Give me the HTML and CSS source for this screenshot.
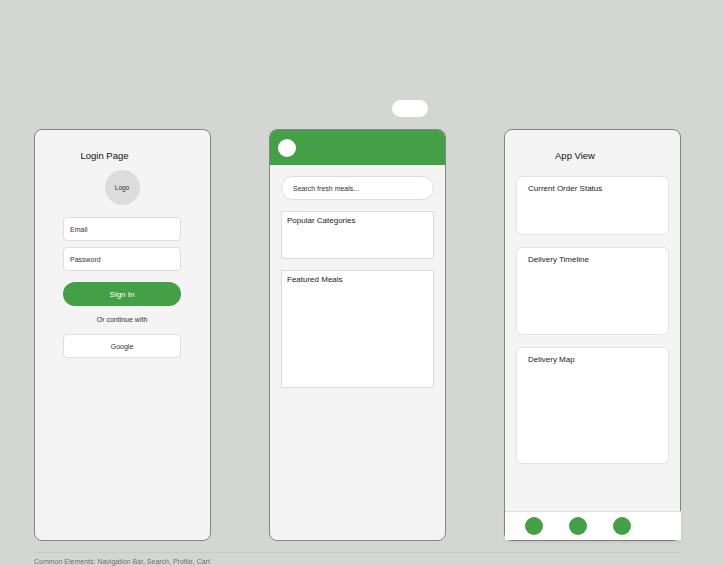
FILE: index.html
```html
<!DOCTYPE html>
<html>
<head>
<meta charset="utf-8">
<link rel="stylesheet" href="styles.css">
</head>
<body>
<div class="page">
  <div class="phones">
    <div class="phone login">
      <div class="title">Login Page</div>
      <div class="logo">Logo</div>
      <div class="field first">Email</div>
      <div class="field">Password</div>
      <div class="btn-primary">Sign In</div>
      <div class="alt">Or continue with</div>
      <div class="btn-google">Google</div>
    </div>

    <div class="phone home">
      <div class="notch"></div>
      <div class="header"><div class="avatar"></div></div>
      <div class="home-body">
        <div class="search">Search fresh meals...</div>
        <div class="box box-cats">Popular Categories</div>
        <div class="box box-meals">Featured Meals</div>
      </div>
    </div>

    <div class="phone app">
      <div class="title">App View</div>
      <div class="cards">
        <div class="card card-status">Current Order Status</div>
        <div class="card card-timeline">Delivery Timeline</div>
        <div class="card card-map">Delivery Map</div>
      </div>
      <div class="nav">
        <span class="dot"></span>
        <span class="dot"></span>
        <span class="dot"></span>
      </div>
    </div>
  </div>
  <div class="footer">Common Elements: Navigation Bar, Search, Profile, Cart</div>
</div>
</body>
</html>
```

FILE: styles.css
```css
* { box-sizing: border-box; }
html, body {
  margin: 0;
  padding: 0;
  background: #d4d6d3;
  font-family: "Liberation Sans", Arial, sans-serif;
  color: #222;
  overflow: hidden;
}
.page {
  padding: 129px 42px 0 34px;
}
.phones {
  display: grid;
  grid-template-columns: 177px 177px 177px;
  column-gap: 58px;
}
.phone {
  position: relative;
  height: 412px;
  background: #f4f4f4;
  border: 1px solid #858585;
  border-radius: 8px;
}
.title {
  margin-top: 20px;
  padding-right: 35px;
  text-align: center;
  font-size: 9.5px;
  line-height: 12px;
  color: #111;
}

/* login */
.login {
  display: flex;
  flex-direction: column;
  padding: 0 29px 0 28px;
}
.logo {
  align-self: center;
  width: 35px;
  height: 35px;
  margin-top: 8px;
  border-radius: 50%;
  background: #dcdcdc;
  display: flex;
  align-items: center;
  justify-content: center;
  font-size: 6.5px;
  color: #333;
}
.field {
  height: 24px;
  margin-top: 6px;
  background: #fff;
  border: 1px solid #dedede;
  border-radius: 4px;
  padding-left: 6px;
  display: flex;
  align-items: center;
  font-size: 7px;
  color: #333;
}
.field.first { margin-top: 12px; }
.btn-primary {
  height: 24px;
  margin-top: 11px;
  background: #43a047;
  border-radius: 12px;
  color: #fff;
  font-size: 8px;
  display: flex;
  align-items: center;
  justify-content: center;
}
.alt {
  margin-top: 9px;
  text-align: center;
  font-size: 7px;
  line-height: 10px;
  color: #333;
}
.btn-google {
  height: 24px;
  margin-top: 9px;
  background: #fff;
  border: 1px solid #dedede;
  border-radius: 4px;
  font-size: 7px;
  color: #333;
  display: flex;
  align-items: center;
  justify-content: center;
  padding-top: 1px;
}

/* home */
.notch {
  position: absolute;
  top: -30px;
  right: 17px;
  width: 36px;
  height: 17px;
  border-radius: 9px;
  background: #fff;
}
.header {
  height: 35px;
  background: #43a047;
  border-radius: 7px 7px 0 0;
  display: flex;
  align-items: center;
  padding-left: 8px;
}
.avatar {
  width: 18px;
  height: 18px;
  border-radius: 50%;
  background: #fff;
}
.home-body {
  padding: 11px 11px 0 11px;
  display: flex;
  flex-direction: column;
  gap: 11px;
}
.search {
  height: 24px;
  background: #fff;
  border: 1px solid #dedede;
  border-radius: 12px;
  padding-left: 11px;
  display: flex;
  align-items: center;
  font-size: 7px;
  color: #333;
}
.box {
  background: #fff;
  border: 1px solid #dcdcdc;
  padding: 4px 5px;
  font-size: 8px;
  line-height: 10px;
  color: #222;
}
.box-cats { height: 48px; }
.box-meals { height: 118px; }

/* app */
.cards {
  margin-top: 14px;
  padding: 0 11px;
  display: flex;
  flex-direction: column;
  gap: 12px;
}
.card {
  background: #fff;
  border: 1px solid #e3e3e3;
  border-radius: 6px;
  padding: 7px 11px;
  font-size: 8px;
  line-height: 10px;
  color: #222;
}
.card-status { height: 59px; }
.card-timeline { height: 88px; }
.card-map { height: 117px; }
.nav {
  position: absolute;
  left: 0;
  right: -1px;
  bottom: 0;
  height: 29px;
  background: #fff;
  border-top: 1px solid #dedede;
  box-shadow: 0 2px 3px rgba(0,0,0,0.08);
  display: flex;
  align-items: center;
  gap: 26px;
  padding-left: 20px;
}
.dot {
  width: 18px;
  height: 18px;
  border-radius: 50%;
  background: #43a047;
}

.footer {
  margin-top: 11px;
  border-top: 1px solid #c9cbc8;
  padding-top: 4px;
  font-size: 7px;
  line-height: 10px;
  color: #6f7470;
}
```
